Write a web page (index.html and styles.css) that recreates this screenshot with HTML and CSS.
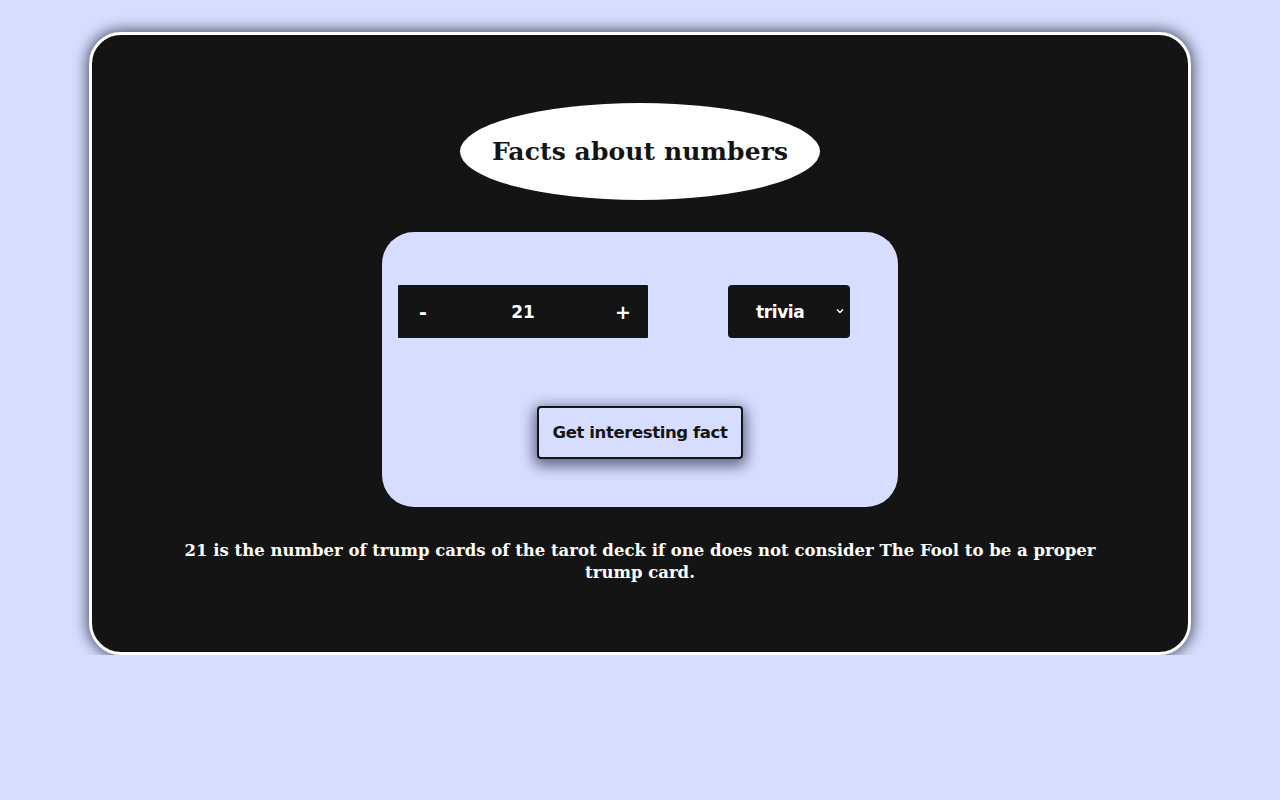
FILE: index.html
```html
<!DOCTYPE html>
<html lang="en">
<head>
<meta charset="utf-8">
<title>Facts about numbers</title>
<link rel="stylesheet" href="styles.css">
</head>
<body>
<div class="page">
  <main class="card">
    <h1 class="title">Facts about numbers</h1>
    <section class="panel">
      <div class="controls">
        <div class="stepper">
          <button class="step">-</button>
          <span class="value">21</span>
          <button class="step">+</button>
        </div>
        <div class="select">
          <span class="select-text">trivia</span>
          <svg class="chev" width="8" height="6" viewBox="0 0 8 6"><path d="M1 1.5 L4 4.5 L7 1.5" fill="none" stroke="#fff" stroke-width="1.4"/></svg>
        </div>
      </div>
      <button class="fetch">Get interesting fact</button>
    </section>
    <p class="fact">21 is the number of trump cards of the tarot deck if one does not consider The Fool to be a proper trump card.</p>
  </main>
</div>
</body>
</html>
```
FILE: styles.css
```css
* { box-sizing: border-box; }
html, body { margin: 0; padding: 0; }
body {
  background: #d6ddfe;
  font-family: "DejaVu Sans", Verdana, sans-serif;
}
.page {
  display: flex;
  justify-content: center;
  padding-top: 32px;
}
.card {
  width: 1102px;
  height: 623px;
  background: #141414;
  border: 3px solid #ffffff;
  border-radius: 32px;
  box-shadow: 0 0 14px 2px rgba(20, 20, 40, 0.7);
  display: flex;
  flex-direction: column;
  align-items: center;
  padding-top: 68px;
}
.title {
  margin: 0;
  width: 360px;
  height: 97px;
  border-radius: 50%;
  background: #ffffff;
  color: #141414;
  display: flex;
  align-items: center;
  justify-content: center;
  font-family: "DejaVu Serif", "Liberation Serif", serif;
  font-weight: bold;
  font-size: 25px;
  letter-spacing: 0.1px;
}
.panel {
  margin-top: 32px;
  width: 516px;
  height: 275px;
  background: #d6ddfe;
  border-radius: 32px;
  padding: 53px 48px 0 16px;
  display: flex;
  flex-direction: column;
  align-items: center;
}
.controls {
  width: 100%;
  display: flex;
  justify-content: space-between;
}
.stepper {
  width: 250px;
  height: 53px;
  background: #141414;
  border-radius: 1px;
  display: flex;
  align-items: center;
  justify-content: space-between;
  color: #ffffff;
  font-weight: bold;
  font-size: 17px;
}
.step {
  width: 50px;
  height: 100%;
  background: transparent;
  border: none;
  color: #ffffff;
  font-family: inherit;
  font-weight: bold;
  font-size: 19px;
  padding: 0;
}
.value {
  flex: 1;
  text-align: center;
}
.select {
  width: 122px;
  height: 53px;
  background: #141414;
  border-radius: 4px;
  color: #ffffff;
  font-weight: bold;
  font-size: 17px;
  letter-spacing: -0.4px;
  display: flex;
  align-items: center;
  padding-left: 28px;
  padding-right: 6px;
}
.select-text { flex: 1; }
.chev { margin-bottom: 1px; }
.fetch {
  margin-top: 68px;
  margin-left: 32px;
  width: 206px;
  height: 53px;
  background: #d6ddfe;
  border: 2px solid #141414;
  border-radius: 4px;
  box-shadow: 0 4px 14px 3px rgba(20, 20, 50, 0.6);
  color: #141414;
  font-family: "DejaVu Sans", Verdana, sans-serif;
  font-weight: bold;
  font-size: 16.5px;
  letter-spacing: -0.4px;
  padding: 0;
}
.fact {
  margin: 33px 0 0;
  width: 930px;
  color: #ffffff;
  text-align: center;
  font-family: "DejaVu Serif", "Liberation Serif", serif;
  font-weight: bold;
  font-size: 16.5px;
  line-height: 22px;
}
```
